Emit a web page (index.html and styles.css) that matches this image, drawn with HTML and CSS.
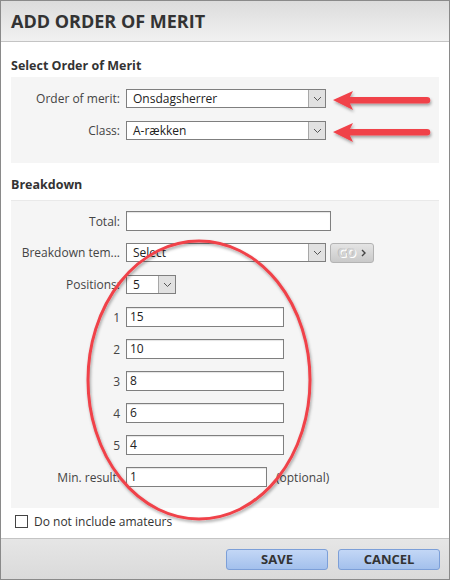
FILE: index.html
```html
<!DOCTYPE html>
<html>
<head>
<meta charset="utf-8">
<link rel="stylesheet" href="styles.css">
</head>
<body>
<div class="dialog">
  <div class="header"><h1 class="title">ADD ORDER OF MERIT</h1></div>
  <div class="content">
    <h2 class="section-title">Select Order of Merit</h2>
    <div class="panel panel-select">
      <div class="row">
        <span class="label">Order of merit:</span>
        <div class="select w200"><span class="sel-text">Onsdagsherrer</span><span class="sel-btn"><svg width="9" height="6" viewBox="0 0 9 6"><path d="M1 1 L4.5 4.5 L8 1" fill="none" stroke="#555" stroke-width="1"/></svg></span></div>
      </div>
      <div class="row">
        <span class="label">Class:</span>
        <div class="select w200"><span class="sel-text">A-rækken</span><span class="sel-btn"><svg width="9" height="6" viewBox="0 0 9 6"><path d="M1 1 L4.5 4.5 L8 1" fill="none" stroke="#555" stroke-width="1"/></svg></span></div>
      </div>
    </div>
    <h2 class="section-title second">Breakdown</h2>
    <div class="panel panel-break">
      <div class="row r20">
        <span class="label">Total:</span>
        <div class="input w205"></div>
      </div>
      <div class="row">
        <span class="label">Breakdown tem...</span>
        <div class="select w200"><span class="sel-text">Select</span><span class="sel-btn"><svg width="9" height="6" viewBox="0 0 9 6"><path d="M1 1 L4.5 4.5 L8 1" fill="none" stroke="#555" stroke-width="1"/></svg></span></div>
        <div class="go-btn"><span class="go-text">GO</span><svg class="go-arrow" width="5" height="8" viewBox="0 0 5 8"><path d="M1 1 L4 4 L1 7" fill="none" stroke="#444" stroke-width="1.4"/></svg></div>
      </div>
      <div class="row">
        <span class="label">Positions:</span>
        <div class="select w50"><span class="sel-text">5</span><span class="sel-btn"><svg width="9" height="6" viewBox="0 0 9 6"><path d="M1 1 L4.5 4.5 L8 1" fill="none" stroke="#555" stroke-width="1"/></svg></span></div>
      </div>
      <div class="row r20"><span class="label">1</span><div class="input w158">15</div></div>
      <div class="row r20"><span class="label">2</span><div class="input w158">10</div></div>
      <div class="row r20"><span class="label">3</span><div class="input w158">8</div></div>
      <div class="row r20"><span class="label">4</span><div class="input w158">6</div></div>
      <div class="row r20"><span class="label">5</span><div class="input w158">4</div></div>
      <div class="row r20"><span class="label">Min. result:</span><div class="input w141">1</div><span class="hint">(optional)</span></div>
    </div>
    <label class="check-row"><span class="checkbox"></span><span class="check-label">Do not include amateurs</span></label>
  </div>
  <div class="footer">
    <button class="btn">SAVE</button>
    <button class="btn">CANCEL</button>
  </div>
  <svg class="annot" width="450" height="580" viewBox="0 0 450 580">
    <defs>
      <filter id="sh" x="-20%" y="-20%" width="140%" height="140%">
        <feDropShadow dx="1" dy="2" stdDeviation="1.5" flood-color="#000" flood-opacity="0.35"/>
      </filter>
    </defs>
    <g filter="url(#sh)">
      <ellipse cx="199" cy="380" rx="111" ry="139" fill="none" stroke="#f0424a" stroke-width="3"/>
      <g fill="#f0424a">
        <path d="M333 100 L353 91 L350 97 L427 97 A3.3 3.3 0 0 1 427 103.6 L350 103.6 L353 110 Z"/>
        <path d="M333 132 L353 123 L350 129 L427 129 A3.3 3.3 0 0 1 427 135.6 L350 135.6 L353 142 Z"/>
      </g>
    </g>
  </svg>
</div>
</body>
</html>
```
FILE: styles.css
```css
* { box-sizing: border-box; }
html, body { margin: 0; padding: 0; background: #fff; }
body { font-family: "Open Sans", "Liberation Sans", sans-serif; color: #333; }

.dialog {
  position: relative;
  width: 450px;
  height: 580px;
  border: 1px solid #8a8a8a;
  display: flex;
  flex-direction: column;
  background: #fff;
  overflow: hidden;
}

.header {
  height: 41px;
  flex: none;
  background: linear-gradient(#dcdcdc, #f1f1f1);
  border-bottom: 1px solid #c4c4c4;
  display: flex;
  align-items: center;
  padding-left: 10px;
}
.title {
  margin: 0;
  font-size: 18px;
  font-weight: 700;
  color: #333;
}

.content {
  flex: 1;
  padding: 0 10px;
  display: flex;
  flex-direction: column;
}

.section-title {
  margin: 0;
  font-size: 12.5px;
  font-weight: 700;
  color: #333;
  height: 35px;
  line-height: 16px;
  padding-top: 16px;
}
.section-title.second {
  height: 37px;
  padding-top: 14px;
}

.panel {
  background: #f5f5f5;
  display: flex;
  flex-direction: column;
}
.panel-select {
  padding: 12px 0 23px;
  gap: 13px;
  height: 86px;
}
.panel-break {
  border-top: 1px solid #e9e9e9;
  padding: 10px 0 21px;
  height: 308px;
  gap: 12px;
}
.panel-break .row { flex: none; }
.panel-break .row:nth-child(2),
.panel-break .row:nth-child(3) { margin-bottom: 1px; }

.row {
  display: flex;
  align-items: center;
  height: 19px;
  font-size: 12px;
}
.row.r20 { height: 20px; }

.label {
  width: 115px;
  text-align: right;
  padding-right: 6px;
  flex: none;
  color: #444;
  white-space: nowrap;
}

.select {
  height: 19px;
  border: 1px solid #7f7f7f;
  background: #fff;
  display: flex;
  align-items: stretch;
  font-size: 12px;
}
.sel-text {
  flex: 1;
  padding-left: 6px;
  line-height: 17px;
  color: #222;
}
.sel-btn {
  width: 17px;
  flex: none;
  background: #e1e1e1;
  border-left: 1px solid #a8a8a8;
  display: flex;
  align-items: center;
  justify-content: center;
}
.w200 { width: 200px; }
.w50 { width: 50px; }

.input {
  height: 20px;
  border: 1px solid #7f7f7f;
  background: #fff;
  padding-left: 3px;
  line-height: 18px;
  font-size: 12px;
  color: #222;
  box-shadow: inset 0 1px 1px #e4e4e4;
}
.w205 { width: 205px; }
.w158 { width: 158px; }
.w141 { width: 141px; }

.hint {
  margin-left: 9px;
  color: #444;
}

.go-btn {
  margin-left: 4px;
  width: 44px;
  height: 20px;
  border: 1px solid #b3b3b3;
  border-radius: 3px;
  background: linear-gradient(#e4e4e4, #c9c9c9);
  display: flex;
  align-items: center;
  justify-content: center;
  gap: 5px;
  font-size: 12px;
  font-weight: 700;
}
.go-text {
  color: #d2d2d2;
  text-shadow: 1px 1px 0 #fff, -1px 0 0 #bdbdbd;
}

.check-row {
  display: flex;
  align-items: center;
  height: 25px;
  padding-left: 4px;
  padding-top: 2px;
  font-size: 12px;
}
.checkbox {
  width: 13px;
  height: 13px;
  border: 1px solid #444;
  background: #fff;
  flex: none;
}
.check-label {
  margin-left: 6px;
  color: #333;
}

.footer {
  height: 41px;
  flex: none;
  border-top: 1px solid #c4c4c4;
  background: linear-gradient(#e6e6e6, #dadada);
  display: flex;
  justify-content: flex-end;
  align-items: flex-start;
  padding: 10px 9px 0 0;
  gap: 10px;
}
.btn {
  width: 102px;
  height: 21px;
  border: 1px solid #7c9fd8;
  border-radius: 3px;
  background: linear-gradient(#c3d7f6, #a3c0ec);
  font-family: "Open Sans", "Liberation Sans", sans-serif;
  font-size: 13px;
  font-weight: 700;
  color: #333;
  padding: 0;
  line-height: 19px;
}

.annot {
  position: absolute;
  left: -1px;
  top: -1px;
  pointer-events: none;
}
```
